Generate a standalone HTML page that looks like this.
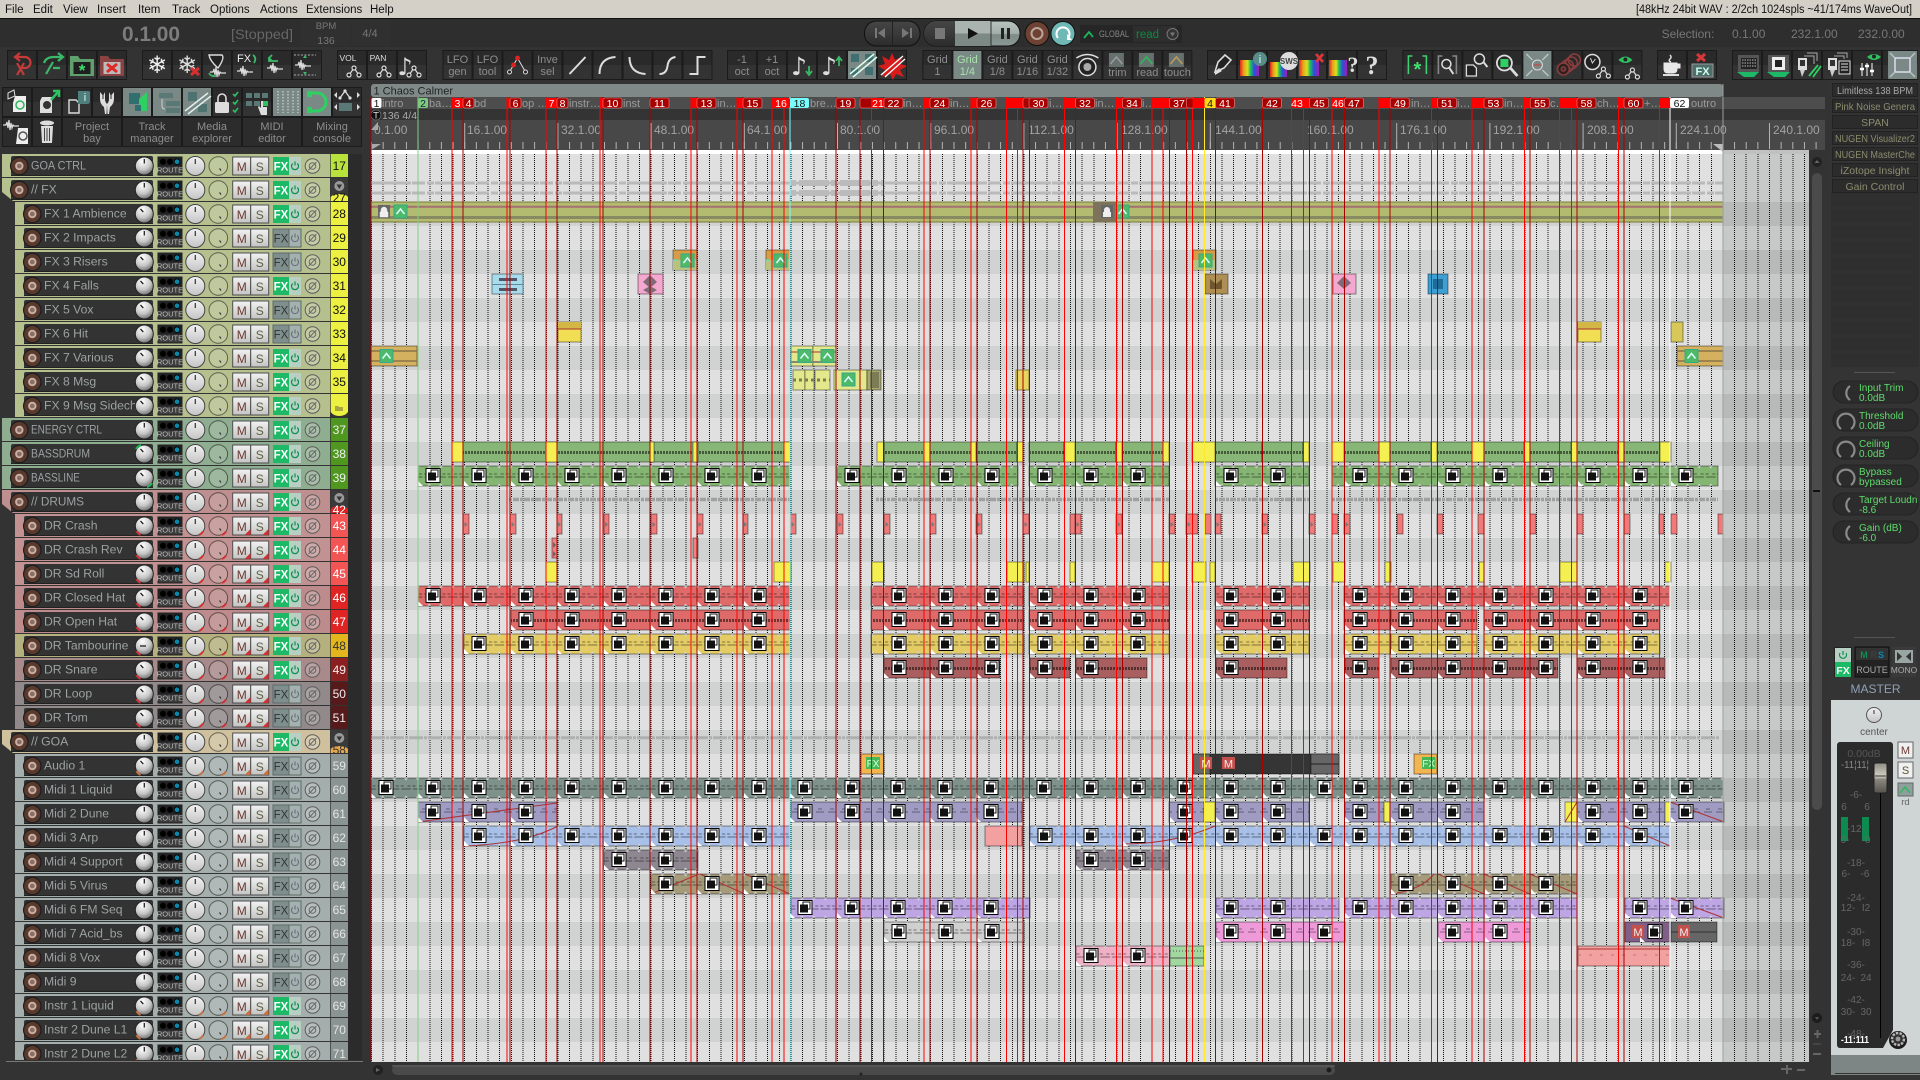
<!DOCTYPE html>
<html><head><meta charset="utf-8"><title>REAPER</title>
<style>
html,body{margin:0;padding:0;background:#333;overflow:hidden}
svg{display:block;font-family:"Liberation Sans",sans-serif}
.n{font-size:12.2px;fill:#9ba1a1}
.no{font-size:12px;text-anchor:middle}
.tb{font-size:11px;fill:#8d8d8d;text-anchor:middle}
.mn{font-size:11.5px;fill:#111}
.rl{font-size:12px;fill:#a2a2a2}
.l{font-size:11px;fill:#9a9a9a}
.m{font-size:10.5px;fill:#fff;text-anchor:middle}
.f{height:10px;y:-9px;rx:2px;ry:2px}
.r{fill:#f00}.d{fill:#a80000;stroke:#e88;stroke-width:.6}
.i rect{height:20px;stroke:rgba(0,0,0,.42);stroke-width:1}
.fl{font-size:10.5px;fill:#8c8c6e;text-anchor:middle}
.kt{font-size:10px;fill:#5fdc6c}
.sc{font-size:10px;fill:#666;text-anchor:middle}
.cr{shape-rendering:crispEdges}
</style></head><body>
<svg xmlns="http://www.w3.org/2000/svg" width="1920" height="1080" viewBox="0 0 1920 1080">
<defs>
<radialGradient id="kb" cx=".4" cy=".25" r=".9"><stop offset="0" stop-color="#fff"/><stop offset=".5" stop-color="#c8c8c8"/><stop offset="1" stop-color="#4c4c4c"/></radialGradient>
<linearGradient id="kw" x1="0" y1="0" x2="0" y2="1"><stop offset="0" stop-color="#f2f2f2"/><stop offset="1" stop-color="#c4c4c4"/></linearGradient>
<linearGradient id="pl" x1="0" y1="0" x2="0" y2="1"><stop offset="0" stop-color="#b9c4c0"/><stop offset=".5" stop-color="#a2aeaa"/><stop offset=".55" stop-color="#7e8a86"/><stop offset="1" stop-color="#8c9895"/></linearGradient>
<linearGradient id="cp" x1="0" y1="0" x2="0" y2="1"><stop offset="0" stop-color="#454545"/><stop offset=".5" stop-color="#3a3a3a"/><stop offset="1" stop-color="#2c2c2c"/></linearGradient>
<linearGradient id="fd" x1="0" y1="0" x2="0" y2="1"><stop offset="0" stop-color="#8f8d82"/><stop offset=".45" stop-color="#d3d0c4"/><stop offset=".55" stop-color="#8a887e"/><stop offset="1" stop-color="#55534c"/></linearGradient>
<linearGradient id="rb" x1="0" y1="0" x2="1" y2="0"><stop offset="0" stop-color="#e3241c"/><stop offset=".2" stop-color="#e6a21c"/><stop offset=".4" stop-color="#d8e01c"/><stop offset=".55" stop-color="#1fbf5e"/><stop offset=".75" stop-color="#2a52d8"/><stop offset="1" stop-color="#a01cb8"/></linearGradient>
<pattern id="dot" width="4" height="2" patternUnits="userSpaceOnUse"><rect width="4" height="1" fill="#111"/></pattern>
<pattern id="bp" width="30" height="30" patternUnits="userSpaceOnUse"><rect width="30" height="30" fill="#1b1b1b"/><rect x="1" y="1" width="28" height="14" fill="#2a2a2a"/><rect x="1" y="15" width="28" height="14" fill="#333"/></pattern>
<g id="sc"><path fill="#d8dad9" d="M0 0h2.2l-2.2 2.4zM11.65 0h-2.2l2.2 2.4zM0 20h2.2l-2.2-2.4zM11.65 20h-2.2l2.2-2.4z"/><path stroke="rgba(0,0,0,.45)" fill="none" d="M0 11h5m2 0h4.6M1.5 8h3m2 0h3"/></g>
<g id="pb"><path stroke="rgba(0,0,0,.5)" stroke-width="3" fill="none" stroke-dasharray="2 1" d="M0 10.5h12"/></g>
<pattern id="sG" width="11.65" height="20" patternUnits="userSpaceOnUse" patternTransform="translate(9.85,0)"><rect width="12" height="20" fill="#85b573"/><use href="#sc"/></pattern>
<pattern id="sR" width="11.65" height="20" patternUnits="userSpaceOnUse" patternTransform="translate(9.85,0)"><rect width="12" height="20" fill="#df6a6a"/><use href="#sc"/></pattern>
<pattern id="sY" width="11.65" height="20" patternUnits="userSpaceOnUse" patternTransform="translate(9.85,0)"><rect width="12" height="20" fill="#e3cb66"/><use href="#sc"/></pattern>
<pattern id="s1" width="11.65" height="20" patternUnits="userSpaceOnUse" patternTransform="translate(9.85,0)"><rect width="12" height="20" fill="#7e918b"/><use href="#sc"/></pattern>
<pattern id="s3" width="11.65" height="20" patternUnits="userSpaceOnUse" patternTransform="translate(9.85,0)"><rect width="12" height="20" fill="#a8bfe8"/><use href="#sc"/></pattern>
<pattern id="s4" width="11.65" height="20" patternUnits="userSpaceOnUse" patternTransform="translate(9.85,0)"><rect width="12" height="20" fill="#8e8792"/><use href="#sc"/></pattern>
<pattern id="s5" width="11.65" height="20" patternUnits="userSpaceOnUse" patternTransform="translate(9.85,0)"><rect width="12" height="20" fill="#a59b7b"/><use href="#sc"/></pattern>
<pattern id="s6" width="11.65" height="20" patternUnits="userSpaceOnUse" patternTransform="translate(9.85,0)"><rect width="12" height="20" fill="#bda6e3"/><use href="#sc"/></pattern>
<pattern id="s8" width="11.65" height="20" patternUnits="userSpaceOnUse" patternTransform="translate(9.85,0)"><rect width="12" height="20" fill="#eeb0c4"/><use href="#sc"/></pattern>
<pattern id="sW" width="11.65" height="20" patternUnits="userSpaceOnUse" patternTransform="translate(9.85,0)"><rect width="12" height="20" fill="#cfcfcf"/><use href="#sc"/></pattern>
<pattern id="pG" width="12" height="20" patternUnits="userSpaceOnUse"><rect width="12" height="20" fill="#87b676"/><use href="#pb"/></pattern>
<pattern id="pR" width="12" height="20" patternUnits="userSpaceOnUse"><rect width="12" height="20" fill="#df6a6a"/><use href="#pb"/></pattern>
<pattern id="pS" width="12" height="20" patternUnits="userSpaceOnUse"><rect width="12" height="20" fill="#a95f5f"/><use href="#pb"/></pattern>
<pattern id="p2" width="12" height="20" patternUnits="userSpaceOnUse"><rect width="12" height="20" fill="#a09bc2"/><path stroke="rgba(0,0,0,.4)" fill="none" d="M0 10h8M2 7h4"/></pattern>
<pattern id="p7" width="12" height="20" patternUnits="userSpaceOnUse"><rect width="12" height="20" fill="#ee9ad8"/><path stroke="rgba(0,0,0,.4)" fill="none" d="M0 10h8M2 7h4"/></pattern>
<g id="L"><path fill="#fff" d="M-15 20v-5l5 5z"/><rect x="-7" y="2.5" width="14" height="14" fill="#fff" stroke="#000"/><path fill="#111" d="M-5 6.500h8v8h-8z"/><path fill="none" stroke="#111" d="M-2 6.500v-2.500h7v7h-2"/></g>
<g id="c">
<rect x="158" y="3" width="24" height="18" fill="#3c3c3c" stroke="#222"/><rect x="158.500" y="3.500" width="23" height="9" fill="#222"/>
<circle cx="163" cy="7.800" r="3" fill="#000"/><circle cx="170" cy="7.800" r="3" fill="#000"/><circle cx="177" cy="7.800" r="2.800" fill="#0a87a8" stroke="#000" stroke-width=".8"/>
<text x="170" y="18.500" font-size="7.500" fill="#b8b8b8" text-anchor="middle">ROUTE</text>
<circle cx="195.300" cy="12" r="9.500" fill="url(#kw)" stroke="#444"/><path d="M195.300 5v5" stroke="#333" stroke-width="1.200"/>
<circle cx="218.300" cy="12" r="9.300" fill="rgba(255,255,255,.14)" stroke="rgba(0,0,0,.5)"/><path d="M219.500 14.500l1.500 2" stroke="#333" stroke-width="1.200"/>
<rect x="232.700" y="3" width="18" height="18" fill="url(#kw)" stroke="#4e4e4e"/><rect x="250.700" y="3" width="18" height="18" fill="url(#kw)" stroke="#4e4e4e"/>
<text x="241.700" y="17" font-size="12" fill="#6a3a30" text-anchor="middle">M</text><text x="259.700" y="17" font-size="12" fill="#5f6040" text-anchor="middle">S</text>
<circle cx="312.500" cy="12" r="7.300" fill="rgba(255,255,255,.22)" stroke="#5c5c5c"/><circle cx="312.500" cy="12" r="3.300" fill="none" stroke="#666"/><path d="M308.500 16l8-8" stroke="#666"/>
</g>
<g id="on"><rect x="273" y="3" width="16" height="18" fill="#1eb967"/><rect x="289" y="3" width="12" height="18" fill="#b8cfc4"/><text x="281" y="16.500" font-size="11.500" font-weight="bold" fill="#fff" text-anchor="middle">FX</text><path d="M292.700 9.500a3.500 3.500 0 1 0 4.600 0M295 7.500v4" fill="none" stroke="#0c8f50" stroke-width="1.200"/></g>
<g id="off"><rect x="273" y="3" width="16" height="18" fill="#7f8f8d" stroke="#5d6a68"/><rect x="289" y="3" width="12" height="18" fill="#a3b1af" stroke="#5d6a68"/><text x="281" y="16.500" font-size="11.500" fill="#333" text-anchor="middle">FX</text><path d="M292.700 9.500a3.500 3.500 0 1 0 4.600 0M295 7.500v4" fill="none" stroke="#667" stroke-width="1"/></g>
<g id="pk"><circle cx="144.300" cy="12" r="9" fill="url(#kb)" stroke="#222"/></g>
<g id="p0"><use href="#pk"/><path d="M144.300 5v4.500" stroke="#222" stroke-width="1.300"/></g>
<g id="p1"><use href="#pk"/><path d="M140.500 7l2.800 3" stroke="#222" stroke-width="1.300"/></g>
<g id="k"><path fill="currentColor" d="M250.500 21v-6l-6 6zM268.500 21v-6l-6 6z"/><path fill="none" stroke="currentColor" stroke-width="2" d="M203 17.500a9.500 9.500 0 0 1-4 3.500M226 17.500a9.500 9.500 0 0 1-4 3.500M136.500 17a9.300 9.300 0 0 0 4 4"/></g>
<g id="nc"><rect x="24" y="2" width="129" height="20" rx="2" fill="#333"/><rect x="24" y="21" width="129" height="1" fill="#222"/><circle cx="32.300" cy="12" r="8.700" fill="#5b3a2e" stroke="#1e1e1e" stroke-width="1.300"/><circle cx="32.300" cy="12" r="3.300" fill="#8c6e62" stroke="#cbb3a9" stroke-width="1.800"/></g>
<g id="nf"><rect x="11" y="2" width="142" height="20" rx="2" fill="#333"/><rect x="11" y="21" width="142" height="1" fill="#222"/><circle cx="19.300" cy="12" r="8.700" fill="#5b3a2e" stroke="#1e1e1e" stroke-width="1.300"/><circle cx="19.300" cy="12" r="3.300" fill="#8c6e62" stroke="#cbb3a9" stroke-width="1.800"/></g>
<g id="fc"><rect x="330.700" width="17.300" height="23" fill="#3a3a3a"/><circle cx="339.300" cy="8" r="5" fill="#999"/><path d="M336.500 6.500h5.600l-2.800 4.500z" fill="#333"/></g>
<g id="ev" fill="none" stroke="#ddd" stroke-width="1.200"><path d="M-7 6l5-7 5 7"/><circle cx="-7" cy="6" r="2" fill="#222"/><circle cx="-2" cy="-1" r="2" fill="#222"/><circle cx="3" cy="6" r="2" fill="#222"/></g>
<g id="wv"><path fill="none" stroke="#ddd" stroke-width="1.200" d="M-10 0h3l1-3 1 6 1-8 1 10 1-7 1 5 1-3 1 1h5"/></g>
<g id="ln"><rect x="-6" y="-9" width="13" height="13" fill="#4eb968" stroke="#3a8"/><path d="M-3.500 0l4-5 4 5" fill="none" stroke="#dff" stroke-width="1.500"/></g>
</defs>

<rect width="1920" height="1080" fill="#333"/>
<!-- menu -->
<rect width="1920" height="18" fill="#d4d0c8"/><rect y="18" width="1920" height="1" fill="#111"/>
<g class="mn">
<text class="mn" x="5" y="13">File</text><text class="mn" x="33" y="13">Edit</text><text class="mn" x="63" y="13">View</text><text class="mn" x="97" y="13">Insert</text><text class="mn" x="138" y="13">Item</text><text class="mn" x="172" y="13">Track</text><text class="mn" x="210" y="13">Options</text><text class="mn" x="260" y="13">Actions</text><text class="mn" x="306" y="13">Extensions</text><text class="mn" x="370" y="13">Help</text>
<text class="mn" x="1636" y="13" textLength="276" lengthAdjust="spacingAndGlyphs">[48kHz 24bit WAV : 2/2ch 1024spls ~41/174ms WaveOut]</text>
</g>
<!-- transport -->
<rect y="19" width="1920" height="28" fill="#2e2e2e"/>
<text x="122" y="41" font-size="21" font-weight="bold" fill="#7c7c7c" textLength="58" lengthAdjust="spacingAndGlyphs">0.1.00</text>
<text x="231" y="39" font-size="14" fill="#666" textLength="62" lengthAdjust="spacingAndGlyphs">[Stopped]</text>
<rect x="301" y="20" width="50" height="26" fill="#303030"/><rect x="352" y="20" width="38" height="26" fill="#303030"/>
<text x="326" y="29" font-size="9.500" fill="#777" text-anchor="middle">BPM</text><text x="326" y="44" font-size="10.500" fill="#777" text-anchor="middle">136</text><text x="370" y="37" font-size="11" fill="#777" text-anchor="middle">4/4</text>
<rect x="864.500" y="21" width="55.500" height="25" rx="12" fill="url(#cp)" stroke="#111"/><path d="M892.500 21v25" stroke="#222"/>
<path fill="#777" d="M875 28h2v10h-2zM885 28v10l-7-5zM902 28v10l7-5zM910 28h2v10h-2z"/>
<rect x="924" y="21" width="96" height="25" rx="12" fill="url(#pl)" stroke="#111"/><path d="M936 21h19v25h-19a12 12 0 0 1-12-12.500 12 12 0 0 1 12-12.500z" fill="url(#cp)"/><path d="M955 21h36v25h-36z" fill="#a9b4b0"/><path d="M955 33.500h36v12.500h-36z" fill="#7d8985"/><path d="M991 21v25" stroke="#333"/>
<rect x="935" y="28" width="10" height="11" fill="#777"/><path d="M968 28v11l10-5.500z" fill="#111"/><path fill="#222" d="M1001 28h3v11h-3zM1007 28h3v11h-3z"/>
<circle cx="1037" cy="33.500" r="12" fill="#6d4232" stroke="#111"/><circle cx="1037" cy="33.500" r="5.500" fill="none" stroke="#bba498" stroke-width="2"/>
<circle cx="1063" cy="33.500" r="12" fill="#6fb8b5" stroke="#111"/><path d="M1058 38a6.500 6.500 0 1 1 10 0" fill="none" stroke="#fff" stroke-width="2"/><path d="M1067 34v6h5z" fill="#fff"/>
<rect x="1080" y="25" width="102" height="18" fill="#262626"/><rect x="1133" y="26" width="43" height="16" fill="#2e2e2e"/>
<path d="M1084 38l5-6 4 5" fill="none" stroke="#1cb85f" stroke-width="1.800"/><text x="1099" y="37" font-size="9" fill="#848484" textLength="30" lengthAdjust="spacingAndGlyphs">GLOBAL</text><text x="1136" y="38" font-size="11.500" fill="#0c8a42">read</text><circle cx="1172.600" cy="34" r="5.500" fill="#333" stroke="#777"/><path d="M1170 32.500h5l-2.500 4z" fill="#777"/>
<text x="1661.600" y="38" font-size="12" fill="#777">Selection:</text><text x="1732" y="38" font-size="12" fill="#777">0.1.00</text><text x="1791" y="38" font-size="12" fill="#777">232.1.00</text><text x="1858" y="38" font-size="12" fill="#777">232.0.00</text>

<!-- right panel bg -->
<rect x="1830" y="80" width="90" height="1000" fill="#343434"/>

<!-- toolbar groups -->
<g transform="translate(7,50)"><rect width="120" height="30" fill="url(#bp)"/>
<path d="M9 7h9a5.500 5.500 0 0 1 0 11h-3M13 3l-5 4 5 4M10 13l7 12M17 13l-7 12" fill="none" stroke="#c63a3a" stroke-width="2.200"/>
<path d="M37 13q2-6 10-6h7M51 3l5 4-5 4M39 24l7-12M46 18h7" fill="none" stroke="#3cb869" stroke-width="2.200"/>
<path fill="#5fa06c" d="M63 6h8l2 3h14v17H63z"/><rect x="66.500" y="12" width="17" height="12" fill="#1f1f1f"/><text x="75" y="26" font-size="17" font-weight="bold" fill="#3fe070" text-anchor="middle">*</text>
<path fill="#8c4242" d="M93 6h8l2 3h14v17H93z"/><rect x="96.500" y="12" width="17" height="12" fill="#bbb"/><path d="M100 14l10 8M110 14l-10 8" stroke="#e02828" stroke-width="3"/>
</g>
<g transform="translate(142,50)"><rect width="180" height="30" fill="url(#bp)"/>
<text x="15" y="23" font-size="24" fill="#eee" text-anchor="middle" font-family="DejaVu Sans">❄</text><text x="45" y="23" font-size="24" fill="#ddd" text-anchor="middle" font-family="DejaVu Sans">❄</text><path d="M49 18l8 7M57 18l-8 7" stroke="#d83030" stroke-width="3"/>
<path d="M67 5h13q3 3-4 13q-8-7-9-13z" fill="#222" stroke="#ddd" stroke-width="1.400"/><use href="#wv" x="78" y="22"/><path d="M67 23q2 4 7 3" fill="none" stroke="#3cb869" stroke-width="1.800"/>
<text x="102" y="12" font-size="11" fill="#eee" text-anchor="middle">FX</text><path d="M111 5q4 3 1 8" fill="none" stroke="#3cb869" stroke-width="1.800"/><use href="#wv" x="105" y="21"/>
<path d="M127 7v4h9M130 5l-3 3 3 3" fill="none" stroke="#3cb869" stroke-width="1.800"/><use href="#wv" x="135" y="18"/>
<path d="M152 5h22M152 25h22" stroke="#aaa" stroke-dasharray="2 1.500"/><use href="#wv" x="163" y="15"/><path d="M161 8h4l-2-3zM161 22h4l-2 3z" fill="#3cb869"/>
</g>
<g transform="translate(337,50)"><rect width="90" height="30" fill="url(#bp)"/>
<text x="11" y="11" font-size="8.500" fill="#ddd" text-anchor="middle">VOL</text><use href="#ev" x="19" y="19"/><text x="41" y="11" font-size="8.500" fill="#ddd" text-anchor="middle">PAN</text><use href="#ev" x="49" y="19"/>
<text x="68" y="25" font-size="24" fill="#ddd" text-anchor="middle" font-family="DejaVu Sans">♪</text><use href="#ev" x="79" y="19"/>
</g>
<g transform="translate(442.500,50)"><rect width="270" height="30" fill="url(#bp)"/>
<text class="tb" x="15" y="13">LFO</text><text class="tb" x="15" y="25">gen</text><text class="tb" x="45" y="13">LFO</text><text class="tb" x="45" y="25">tool</text>
<path d="M67 22l8-14 8 14" fill="none" stroke="#ddd"/><circle cx="67" cy="22" r="2" fill="#222" stroke="#ddd"/><circle cx="71" cy="15" r="2.400" fill="#d22"/><circle cx="75" cy="8" r="2.400" fill="#d22"/><circle cx="83" cy="22" r="2" fill="#222" stroke="#ddd"/>
<text class="tb" x="105" y="13">Inve</text><text class="tb" x="105" y="25">sel</text>
<path d="M127 24L143 7" stroke="#ddd" stroke-width="2"/><path d="M157 24q0-16 16-17" fill="none" stroke="#ddd" stroke-width="2"/><path d="M187 7q0 16 16 17" fill="none" stroke="#ddd" stroke-width="2"/><path d="M217 24q7 0 8-8t8-9" fill="none" stroke="#ddd" stroke-width="2"/><path d="M247 24h8V7h8" fill="none" stroke="#ddd" stroke-width="2"/>
</g>
<g transform="translate(727,50)"><rect width="180" height="30" fill="url(#bp)"/>
<text class="tb" x="15" y="13">-1</text><text class="tb" x="15" y="25">oct</text><text class="tb" x="45" y="13">+1</text><text class="tb" x="45" y="25">oct</text>
<text x="72" y="25" font-size="25" fill="#ddd" text-anchor="middle" font-family="DejaVu Sans">♪</text><path d="M82 16v7M79 21l3 4 3-4" fill="none" stroke="#3cb869" stroke-width="1.800"/>
<text x="102" y="25" font-size="25" fill="#ddd" text-anchor="middle" font-family="DejaVu Sans">♪</text><path d="M112 8v8M109 11l3-4 3 4" fill="none" stroke="#3cb869" stroke-width="1.800"/>
<rect x="121" y="1" width="28" height="28" fill="#7a8886"/><path fill="#3f6f70" d="M124 4h8v8h-8zM138 17h8v8h-8zM124 18h7v7h-7zM138 4h8v8h-8z"/><path d="M123 24l24-20M126 27l24-20" stroke="#dfe" stroke-width="1.500"/>
<path fill="#d81c1c" d="M165 3l3 7 8-4-3 8 7 2-7 4 4 7-8-3-3 6-3-6-8 3 3-7-7-4 7-2-3-8 7 4z"/><path d="M154 25l22-19M158 27l20-18" stroke="#fff" stroke-width="1.300"/>
</g>
<g transform="translate(922.400,50)"><rect width="270" height="30" fill="url(#bp)"/>
<text class="tb" x="15" y="13">Grid</text><text class="tb" x="15" y="25">1</text>
<rect x="31" y="1" width="28" height="28" fill="#7a8886"/><text class="tb" x="45" y="13" style="fill:#a7e3ab">Grid</text><text class="tb" x="45" y="25" style="fill:#a7e3ab">1/4</text>
<text class="tb" x="75" y="13">Grid</text><text class="tb" x="75" y="25">1/8</text><text class="tb" x="105" y="13">Grid</text><text class="tb" x="105" y="25">1/16</text><text class="tb" x="135" y="13">Grid</text><text class="tb" x="135" y="25">1/32</text>
<circle cx="165" cy="17" r="8.500" fill="#222" stroke="#ddd" stroke-width="1.500"/><circle cx="165" cy="17" r="4" fill="#aaa"/><path d="M154 8q11-7 22 0" fill="none" stroke="#ddd" stroke-width="1.500"/>
<rect x="186.500" y="3" width="15" height="14" fill="#66706e"/><path d="M188 14l6-7 6 7" fill="none" stroke="#999" stroke-width="1.600"/><text class="tb" x="195" y="26">trim</text>
<rect x="216.500" y="3" width="15" height="14" fill="#66706e"/><path d="M218 14l6-7 6 7" fill="none" stroke="#2fb85c" stroke-width="1.600"/><text class="tb" x="225" y="26">read</text>
<rect x="246.500" y="3" width="15" height="14" fill="#66706e"/><path d="M248 14l6-7 6 7" fill="none" stroke="#b99c5a" stroke-width="1.600"/><text class="tb" x="255" y="26">touch</text>
</g>
<g transform="translate(1207,50)"><rect width="180" height="30" fill="url(#bp)"/>
<path d="M8 22l3-10 7-7 6 5-7 8z" fill="#222" stroke="#ddd" stroke-width="1.600"/><path d="M8 22v3l7-4-3-3z" fill="#ddd"/>
<rect x="33" y="10" width="19" height="16" fill="url(#rb)"/><circle cx="53" cy="9" r="7" fill="#5a8d8a"/><text x="53" y="13" font-size="11" fill="#dff" text-anchor="middle">i</text>
<rect x="63" y="12" width="17" height="15" fill="url(#rb)"/><circle cx="82" cy="11" r="9" fill="#ddd"/><text x="82" y="14" font-size="8" font-weight="bold" fill="#444" text-anchor="middle">SWS</text>
<rect x="92" y="10" width="20" height="16" fill="url(#rb)"/><path d="M109 4l7 8M116 4l-7 8" stroke="#d83838" stroke-width="2.800"/>
<rect x="122" y="10" width="18" height="16" fill="url(#rb)"/><text x="146" y="22" font-size="22" font-weight="bold" fill="#ddd" text-anchor="middle" font-family="Liberation Serif">?</text>
<text x="165" y="24" font-size="26" font-weight="bold" fill="#ddd" text-anchor="middle" font-family="Liberation Serif">?</text>
</g>
<g transform="translate(1402.400,50)"><rect width="240" height="30" fill="url(#bp)"/>
<path d="M6 24V6h4M24 24V6h-4" fill="none" stroke="#3fd070" stroke-width="1.600"/><text x="15" y="26" font-size="20" font-weight="bold" fill="#3fe070" text-anchor="middle">*</text>
<path d="M36 24V6h4M54 24V6h-4" fill="none" stroke="#888" stroke-width="1.600"/><circle cx="44" cy="14" r="4.500" fill="none" stroke="#ddd" stroke-width="1.500"/><path d="M47 18l4 6" stroke="#ddd" stroke-width="2"/>
<path d="M64 15h7l3 3v8H64z" fill="#222" stroke="#ddd" stroke-width="1.300"/><circle cx="77" cy="9" r="5" fill="none" stroke="#ddd" stroke-width="1.500"/><path d="M81 12l4 5" stroke="#ddd" stroke-width="2"/>
<circle cx="102" cy="13" r="7.500" fill="none" stroke="#ddd" stroke-width="1.800"/><rect x="98" y="9" width="8" height="8" fill="#2fd062"/><path d="M108 18l7 8" stroke="#ddd" stroke-width="2.800"/>
<rect x="121" y="1" width="28" height="28" fill="#7a8886"/><circle cx="135" cy="15" r="5" fill="none" stroke="#ddd"/><path d="M132 15h6" stroke="#c44" stroke-width="1.300"/><path d="M124 4l6 6M146 4l-6 6M124 26l6-6M146 26l-6-6" stroke="#b8c4c2" stroke-width="1.500"/>
<g fill="none" stroke="#8c3c3c" stroke-width="1.600"><circle cx="172" cy="10" r="6"/><circle cx="169" cy="13" r="6"/><circle cx="165" cy="16" r="6"/><circle cx="161" cy="19" r="6" fill="#2e2020"/><circle cx="161" cy="19" r="2"/></g>
<circle cx="190" cy="12" r="7.500" fill="#222" stroke="#ddd" stroke-width="1.500"/><path d="M188 8l2 5 3-4" fill="none" stroke="#ddd"/><use href="#ev" x="203" y="20"/>
<path d="M216 10q7-7 14 0q-7 6-14 0z" fill="#2fc062"/><circle cx="223" cy="9.500" r="2" fill="#222"/><use href="#ev" x="232" y="21"/>
</g>
<g transform="translate(1657,50)"><rect width="60" height="30" fill="url(#bp)"/>
<path d="M7 13h13v6q0 4-4 4h-5q-4 0-4-4zM20 14h3v4h-3" fill="#e8e8e8" stroke="#e8e8e8"/><rect x="6" y="24" width="16" height="2" fill="#ddd"/><path d="M13 5q2 2 0 4q-2 2 1 3" fill="none" stroke="#ddd" stroke-width="1.500"/>
<path d="M40 4l8 7M48 4l-8 7" stroke="#d83838" stroke-width="3"/><rect x="35" y="14" width="21" height="13" fill="#4f6d6b" stroke="#999"/><text x="45.500" y="25" font-size="11" font-weight="bold" fill="#cfe" text-anchor="middle">FX</text>
</g>
<g transform="translate(1732,50)"><rect width="186" height="30" fill="url(#bp)"/>
<rect x="6" y="5" width="21" height="17" fill="#555"/><rect x="9" y="8" width="16" height="11" fill="#222"/><path d="M10 10h14M10 13h14M10 16h14" stroke="#bbb" stroke-dasharray="1.500 1"/><path d="M6 5v17M5 22h22l-5 5H12z" fill="#1eb967"/>
<rect x="36" y="5" width="21" height="17" fill="#555"/><rect x="40" y="7" width="13" height="13" fill="#eee"/><rect x="43" y="10" width="7" height="7" fill="#222"/><path d="M35 22h23l-5 5H42z" fill="#1eb967"/>
<path d="M75 3h10v8M72 6h10v8" fill="none" stroke="#aaa"/><rect x="66" y="8" width="9" height="12" fill="#ddd"/><rect x="68" y="10" width="5" height="6" fill="#333"/><path d="M68 20l2 7 3-7z" fill="#ccc"/><path d="M77 26l9-11M81 27l8-11" stroke="#2fd062" stroke-width="1.800"/>
<path d="M105 3h10v5M102 6h10v3" fill="none" stroke="#aaa"/><rect x="96" y="8" width="9" height="12" fill="#ddd"/><rect x="98" y="10" width="5" height="6" fill="#333"/><path d="M98 20l2 7 3-7z" fill="#ccc"/><rect x="107" y="11" width="11" height="13" fill="#222" stroke="#ddd"/><path d="M109 14h7M109 17h7M109 20h7" stroke="#ddd"/>
<path d="M130 13v13M135 13v13M140 13v13" stroke="#ddd" stroke-width="1.200"/><path d="M128 19h4M133 16h4M138 21h4" stroke="#fff" stroke-width="2.400"/><path d="M135 7q7-6 14 0q-7 6-14 0z" fill="#2fc062"/><circle cx="142" cy="6.500" r="2" fill="#222"/>
<rect x="156" y="1" width="29" height="28" fill="#7a8886"/><rect x="163" y="8" width="15" height="14" fill="none" stroke="#dde" stroke-width="1.500"/><path d="M158 3l5 5M183 3l-5 5M158 27l5-5M183 27l-5-5" stroke="#b8c4c2" stroke-width="1.500"/>
</g>

<!-- row 2/3 buttons -->
<g transform="translate(2,87)"><rect width="360" height="30" fill="url(#bp)"/>
<rect x="121" y="1" width="28" height="28" fill="#7a8886"/><rect x="151" y="1" width="28" height="28" fill="#7a8886"/><rect x="181" y="1" width="28" height="28" fill="#7a8886"/><rect x="271" y="1" width="28" height="28" fill="#7a8886"/><rect x="301" y="1" width="28" height="28" fill="#7a8886"/>
<path d="M13 9h11v16H11V16z" fill="#eee"/><circle cx="18" cy="18" r="4" fill="none" stroke="#2fb85c" stroke-width="1.500"/><path d="M6 12V6l6-3 1 6z" fill="none" stroke="#ddd"/>
<path d="M40 10h10v16H38V14z" fill="#ddd"/><circle cx="45" cy="18" r="4" fill="#333"/><path d="M49 13l7-8M51 4h6v6" fill="none" stroke="#2fc062" stroke-width="2.500"/>
<path d="M67 13h7l3 3v10H67z" fill="none" stroke="#ddd" stroke-width="1.400"/><path d="M76 4h10a2 2 0 0 1 2 2v8q0 3-3 3h-9z" fill="#4f7f7d"/><text x="83" y="14" font-size="11" fill="#dff" text-anchor="middle">i</text>
<path d="M98 5v7q0 5 4 8l1 7h1.500l.5-10q-2-2-2-5V5l-1.500 3v4h-1V8zM112 5v7q0 5-4 8l-1 7h-1.500l-.5-10q2-2 2-5V5l1.500 3v4h1V8z" fill="#ddd"/>
<g transform="translate(30,0)">
<rect x="97" y="6" width="11" height="11" fill="#2f6f6d"/><path d="M107 24V12l8-7v19z" fill="#2fd062"/><rect x="103" y="18" width="6" height="6" fill="#2f6f6d"/>
<rect x="127" y="6" width="14" height="5" fill="#597876"/><rect x="134" y="14" width="14" height="5" fill="#597876"/><rect x="134" y="21" width="14" height="5" fill="#597876"/><path d="M130 12v7q0 3 3 3" fill="none" stroke="#c8d8d6"/>
<rect x="156" y="5" width="9" height="9" fill="#4d7270"/><rect x="166" y="17" width="9" height="8" fill="#4d7270"/><path d="M153 24l23-18M156 27l23-18" stroke="#e0eeec" stroke-width="1.500"/>
<rect x="183" y="15" width="14" height="11" rx="1.500" fill="#ddd"/><path d="M186 15v-4a4 4 0 0 1 8 0v4" fill="none" stroke="#ddd" stroke-width="1.600"/><path d="M201 7l2 2 3-4M201 15l2 2 3-4M201 23l2 2 3-4" fill="none" stroke="#2fc062" stroke-width="1.600"/>
<path fill="#597876" d="M214 6h6v5h-6zM222 6h6v5h-6zM230 6h6v5h-6zM214 14h6v5h-6zM222 14h6v5h-6z"/><rect x="230" y="14" width="6" height="5" fill="#2fc062"/><path d="M229 28l-3-8 1-1 2 2v-7h2v6h4v8z" fill="#ddd"/>
</g>
<path d="M276 4v22M281 4v22M286 4v22M291 4v22M296 4v22" stroke="#d8e4e2" stroke-dasharray="1.500 1.500"/>
<path d="M307 6h8a9 9 0 0 1 0 18h-8" fill="none" stroke="#2fd062" stroke-width="3"/><path d="M305 4v6h5V4zM305 20v6h5v-6z" fill="#2fd062"/>
<path d="M338 11l5-7 5 7" fill="none" stroke="#ddd" stroke-width="1.300"/><circle cx="338" cy="11" r="1.600" fill="#ddd"/><circle cx="343" cy="4" r="1.600" fill="#ddd"/><circle cx="348" cy="11" r="1.600" fill="#ddd"/><rect x="337" y="16" width="13" height="8" fill="#597876"/><path d="M335 5l-3 3 3 3M355 5l3 3-3 3M335 17l-3 3 3 3M355 17l3 3-3 3" fill="#ddd"/>
</g>
<g transform="translate(2,117)"><rect width="360" height="30" fill="#1b1b1b"/>
<rect x="1" y="1" width="28" height="28" fill="#2c2c2c"/><rect x="31" y="1" width="28" height="28" fill="#2c2c2c"/><rect x="61" y="1" width="58" height="28" fill="#2c2c2c"/><rect x="121" y="1" width="58" height="28" fill="#2c2c2c"/><rect x="181" y="1" width="58" height="28" fill="#2c2c2c"/><rect x="241" y="1" width="58" height="28" fill="#2c2c2c"/><rect x="301" y="1" width="58" height="28" fill="#2c2c2c"/>
<path d="M16 11h10v16H14z" fill="#eee"/><circle cx="21" cy="19" r="4" fill="none" stroke="#555" stroke-width="1.500"/><use href="#wv" x="11" y="8"/>
<ellipse cx="45" cy="6" rx="7" ry="2.500" fill="#ddd"/><path d="M39 9h12l-1 17H40z" fill="#ddd"/><path d="M42.500 11v13M45 11v13M47.500 11v13" stroke="#444"/>
<text class="tb" x="90" y="13">Project</text><text class="tb" x="90" y="25">bay</text><text class="tb" x="150" y="13">Track</text><text class="tb" x="150" y="25">manager</text><text class="tb" x="210" y="13">Media</text><text class="tb" x="210" y="25">explorer</text><text class="tb" x="270" y="13">MIDI</text><text class="tb" x="270" y="25">editor</text><text class="tb" x="330" y="13">Mixing</text><text class="tb" x="330" y="25">console</text>
</g>

<!-- ruler / lanes -->
<rect x="371" y="84" width="1352" height="13" rx="3" fill="#7f8a88"/><text x="373.500" y="94.500" font-size="11" fill="#222">1  Chaos Calmer</text>
<rect x="371" y="97" width="1454" height="12" fill="#4d4d4d"/><rect x="371" y="109" width="1454" height="11" fill="#343434"/><rect x="371" y="120" width="1454" height="30" fill="#484848"/>
<path d="M371 145.500H1826" stroke="#b4b4b4" stroke-width="7" stroke-dasharray="1 10.650"/>
<path d="M464.200 136H1826" stroke="#b4b4b4" stroke-width="26" stroke-dasharray="1 92.200"/>
<rect x="371" y="150" width="1352" height="4" fill="#fff"/><rect x="1723" y="150" width="86" height="4" fill="#c0c2c1"/>
<path d="M371 130l7-8v8zM371 150l10-6h-10z" fill="#aaa"/><path d="M1713 144h10v8z" fill="#bbb"/>
<g>
<text class="rl" x="374" y="134">0.1.00</text><text class="rl" x="467" y="134">16.1.00</text><text class="rl" x="561" y="134">32.1.00</text><text class="rl" x="654" y="134">48.1.00</text><text class="rl" x="747" y="134">64.1.00</text><text class="rl" x="840" y="134">80.1.00</text><text class="rl" x="934" y="134">96.1.00</text><text class="rl" x="1028" y="134">112.1.00</text><text class="rl" x="1121" y="134">128.1.00</text><text class="rl" x="1215" y="134">144.1.00</text><text class="rl" x="1307" y="134">160.1.00</text><text class="rl" x="1400" y="134">176.1.00</text><text class="rl" x="1493" y="134">192.1.00</text><text class="rl" x="1587" y="134">208.1.00</text><text class="rl" x="1680" y="134">224.1.00</text><text class="rl" x="1773" y="134">240.1.00</text>
</g>
<circle cx="376" cy="115" r="5" fill="#111" stroke="#888" stroke-width=".6"/><text x="376" y="118.500" font-size="9.500" fill="#ddd" text-anchor="middle">T</text><text x="382" y="119" font-size="10.500" fill="#aaa">136 4/4</text>

<!-- arrange bg -->
<rect x="371" y="154" width="1352" height="908" fill="#dfe0df"/><rect x="1723" y="154" width="86" height="908" fill="#c7c9c8"/>
<path d="M1047 202V1062" stroke="#d1d3d2" stroke-width="1352" stroke-dasharray="24 24"/>
<path d="M1766 202V1062" stroke="#b8bab9" stroke-width="86" stroke-dasharray="24 24"/>
<path class="cr" d="M371 608H1809" stroke="url(#dot)" stroke-width="908" stroke-dasharray="1 10.650"/>

<!-- items -->
<g class="i">
<path d="M371 183H1723M371 193H1723" stroke="#bababa" stroke-width="3" stroke-dasharray="40 1 13 2 7 1"/>
<path d="M790 183H885M790 193H885" stroke="#bbb" stroke-width="6" stroke-dasharray="6 3 30 2"/>
<g transform="translate(0,202)"><rect x="371" width="1352" fill="#b3bb70" style="stroke:#7b7b3c"/><path d="M371 4.700H1723" stroke="#a57070" stroke-width="2"/><path d="M371 15.500H1723" stroke="#888a62" stroke-width="3"/><rect x="1093" width="23" fill="#7d735a" style="stroke:none"/>
<rect x="378" y="3" width="12" height="13" style="height:13px;stroke:none" fill="#666"/><path d="M381 11v-3a3 3 0 0 1 6 0v3M380 10h8v5h-8z" fill="#eee" stroke="#eee" stroke-width=".5"/><use href="#ln" x="400" y="12"/>
<rect x="1101" y="3" width="12" height="13" style="height:13px;stroke:none" fill="#666"/><path d="M1104 11v-3a3 3 0 0 1 6 0v3M1103 10h8v5h-8z" fill="#eee"/><use href="#ln" x="1122" y="12"/></g>
<g transform="translate(0,250)"><rect x="673" width="24" fill="#d99c46"/><rect x="673" y="10" width="24" style="height:10px;stroke:none" fill="#b8c27c"/><path d="M673 10h24" stroke="#3ee" stroke-width="1" stroke-dasharray="4 16"/><use href="#ln" x="687" y="13"/>
<rect x="766" width="24" fill="#d99c46"/><rect x="766" y="10" width="24" style="height:10px;stroke:none" fill="#b8c27c"/><path d="M766 10h24" stroke="#3ee" stroke-width="1" stroke-dasharray="4 16"/><use href="#ln" x="780" y="13"/>
<rect x="1193" width="23" fill="#d99c46"/><rect x="1193" y="10" width="23" style="height:10px;stroke:none" fill="#b8c27c"/><use href="#ln" x="1205" y="13"/></g>
<g transform="translate(0,274)"><rect x="492" width="31" fill="#a8dcec"/><path d="M499 5.500h18M499 15.500h18" stroke="#556" stroke-width="3"/><path d="M492 10.500h31" stroke="#5b8a9a"/>
<rect x="638" width="25" fill="#f4a8d0"/><path d="M650 1l7 7-7 6-7-6zM650 12l7 4-7 4-7-4z" fill="#7f6a78"/>
<rect x="1205" width="23" fill="#b08f55"/><path d="M1210 5l6 5 6-5v10h-12z" fill="#70552e"/>
<rect x="1333" width="23" fill="#f4a8d0"/><path d="M1344 2l7 7-7 6-7-6z" fill="#7f6a78"/>
<rect x="1428" width="20" fill="#3d9fd2"/><rect x="1433" y="5" width="10" style="height:10px;stroke:none" fill="#1f6d96"/></g>
<g transform="translate(0,322)"><rect x="558" width="23" fill="#f2de55"/><rect x="558" width="23" style="height:7px;stroke:none" fill="#d3b746"/><path d="M558 7h23" stroke="#a33" stroke-width="1"/>
<rect x="1578" width="23" fill="#f2de55"/><rect x="1578" width="23" style="height:7px;stroke:none" fill="#d3b746"/><path d="M1578 7h23" stroke="#a33"/>
<rect x="1671" width="12" fill="#d8c85a"/></g>
<g transform="translate(0,346)"><rect x="371" width="46" fill="#d4b15f"/><path d="M371 5h46M371 15h46" stroke="#8a7448" stroke-width="1.500"/><use href="#ln" x="386" y="12.500"/>
<rect x="791" width="22" fill="#e2e88b"/><rect x="813" width="23" fill="#e2e88b"/><path d="M791 6h45" stroke="#a33"/><path d="M791 16h45" stroke="#887" stroke-width="2"/><use href="#ln" x="804" y="12.500"/><use href="#ln" x="827" y="12.500"/>
<rect x="1677" width="46" fill="#d4b15f"/><path d="M1677 5h46M1677 15h46" stroke="#8a7448" stroke-width="1.500"/><use href="#ln" x="1691" y="12.500"/></g>
<g transform="translate(0,370)"><rect x="793" width="12" fill="#e2e88b"/><rect x="805" width="9" fill="#e2e88b"/><rect x="815" width="15" fill="#e2e88b"/><path d="M793 10h37" stroke="#7c7c50" stroke-width="3" stroke-dasharray="3 3"/><rect x="834" width="33" fill="#e2e88b"/><use href="#ln" x="848" y="12"/><rect x="867" width="14" fill="#a8a86e"/><rect x="870" y="2" width="9" style="height:16px;stroke:none" fill="#7d7d55"/>
<rect x="1016" width="13" fill="#e8d45e"/></g>
<g transform="translate(0,442)"><g fill="url(#pG)"><rect x="463" width="327"/><rect x="884" width="40"/><rect x="930" width="41"/><rect x="976" width="41"/><rect x="1029" width="35"/><rect x="1075" width="41"/><rect x="1122" width="41"/><rect x="1215" width="47"/><rect x="1262" width="41"/><rect x="1344" width="326"/></g>
<g fill="#f4f052"><rect x="452" width="11"/><rect x="546" width="11"/><rect x="650" width="4"/><rect x="693" width="5"/><rect x="784" width="6"/><rect x="877" width="7"/><rect x="924" width="6"/><rect x="971" width="5"/><rect x="1017" width="6"/><rect x="1064" width="11"/><rect x="1116" width="6"/><rect x="1163" width="6"/><rect x="1192" width="23"/><rect x="1303" width="6"/><rect x="1332" width="12"/><rect x="1379" width="11"/><rect x="1431" width="6"/><rect x="1472" width="12"/><rect x="1524" width="6"/><rect x="1571" width="6"/><rect x="1618" width="6"/><rect x="1660" width="11"/></g></g>
<g transform="translate(0,466)" fill="url(#sG)"><rect x="418" width="372"/><rect x="837" width="181"/><rect x="1029" width="140"/><rect x="1215" width="94"/><rect x="1332" width="386"/>
<use href="#L" x="433"/><use href="#L" x="479"/><use href="#L" x="526"/><use href="#L" x="572"/><use href="#L" x="619"/><use href="#L" x="666"/><use href="#L" x="712"/><use href="#L" x="759"/><use href="#L" x="852"/><use href="#L" x="899"/><use href="#L" x="946"/><use href="#L" x="992"/><use href="#L" x="1045"/><use href="#L" x="1091"/><use href="#L" x="1138"/><use href="#L" x="1231"/><use href="#L" x="1278"/><use href="#L" x="1360"/><use href="#L" x="1406"/><use href="#L" x="1453"/><use href="#L" x="1500"/><use href="#L" x="1546"/><use href="#L" x="1593"/><use href="#L" x="1640"/><use href="#L" x="1686"/></g>
<path d="M509 499.500H790M876 499.500H1169M1215 499.500H1309M1332 499.500H1718" stroke="#a0a0a0" stroke-width="3.500" stroke-dasharray="3 1 6 1"/>
<g transform="translate(0,514)" fill="#f0797a"><rect x="463" width="6"/><rect x="510" width="6"/><rect x="557" width="5"/><rect x="604" width="5"/><rect x="651" width="6"/><rect x="697" width="6"/><rect x="743" width="5"/><rect x="790" width="6"/><rect x="837" width="6"/><rect x="884" width="6"/><rect x="930" width="6"/><rect x="976" width="6"/><rect x="1023" width="6"/><rect x="1070" width="6"/><rect x="1075" width="6"/><rect x="1116" width="6"/><rect x="1169" width="6"/><rect x="1186" width="12"/><rect x="1205" width="6"/><rect x="1215" width="6"/><rect x="1262" width="6"/><rect x="1309" width="6"/><rect x="1332" width="6"/><rect x="1344" width="6"/><rect x="1397" width="6"/><rect x="1437" width="6"/><rect x="1478" width="6"/><rect x="1530" width="6"/><rect x="1577" width="6"/><rect x="1624" width="6"/><rect x="1659" width="5"/><rect x="1671" width="6"/><rect x="1718" width="5"/>
<path fill="#777" d="M464.500 8l3 2.500-3 2.500zM511.500 8l3 2.500-3 2.500zM558 8l3 2.500-3 2.500zM605 8l3 2.500-3 2.500zM652.500 8l3 2.500-3 2.500zM698.500 8l3 2.500-3 2.500zM744 8l3 2.500-3 2.500zM791.500 8l3 2.500-3 2.500zM838.500 8l3 2.500-3 2.500zM885.500 8l3 2.500-3 2.500zM931.500 8l3 2.500-3 2.500zM977.500 8l3 2.500-3 2.500zM1024.500 8l3 2.500-3 2.500zM1076.500 8l3 2.500-3 2.500zM1117.500 8l3 2.500-3 2.500zM1170.500 8l3 2.500-3 2.500zM1187.500 8l3 2.500-3 2.500zM1216.500 8l3 2.500-3 2.500zM1263.500 8l3 2.500-3 2.500zM1310.500 8l3 2.500-3 2.500zM1345.500 8l3 2.500-3 2.500z"/></g>
<g transform="translate(0,538)" fill="#ef8383"><rect x="552" width="5"/><path d="M553 4l3 3-3 3zM553 13l3 3-3 3z" fill="#666"/><rect x="693" width="5"/></g>
<g transform="translate(0,562)" fill="#f4f052"><rect x="546" width="11"/><rect x="774" width="17"/><rect x="872" width="12"/><rect x="1007" width="17"/><rect x="1026" width="3"/><rect x="1070" width="5"/><rect x="1152" width="17"/><rect x="1192" width="14"/><rect x="1210" width="5"/><rect x="1293" width="17"/><rect x="1333" width="12"/><rect x="1385" width="6"/><rect x="1479" width="5"/><rect x="1560" width="17"/><rect x="1665" width="6"/></g>
<g transform="translate(0,586)" fill="url(#sR)"><rect x="418" width="372"/><rect x="871" width="153"/><rect x="1029" width="140"/><rect x="1215" width="94"/><rect x="1344" width="326"/>
<use href="#L" x="433"/><use href="#L" x="479"/><use href="#L" x="526"/><use href="#L" x="572"/><use href="#L" x="619"/><use href="#L" x="666"/><use href="#L" x="712"/><use href="#L" x="759"/><use href="#L" x="899"/><use href="#L" x="946"/><use href="#L" x="992"/><use href="#L" x="1045"/><use href="#L" x="1091"/><use href="#L" x="1138"/><use href="#L" x="1231"/><use href="#L" x="1278"/><use href="#L" x="1360"/><use href="#L" x="1406"/><use href="#L" x="1453"/><use href="#L" x="1500"/><use href="#L" x="1546"/><use href="#L" x="1593"/><use href="#L" x="1640"/></g>
<g transform="translate(0,610)" fill="url(#pR)"><rect x="511" width="279"/><rect x="871" width="153"/><rect x="1029" width="140"/><rect x="1215" width="94"/><rect x="1344" width="47"/><rect x="1391" width="86"/><rect x="1484" width="176"/>
<use href="#L" x="526"/><use href="#L" x="572"/><use href="#L" x="619"/><use href="#L" x="666"/><use href="#L" x="712"/><use href="#L" x="759"/><use href="#L" x="899"/><use href="#L" x="946"/><use href="#L" x="992"/><use href="#L" x="1045"/><use href="#L" x="1091"/><use href="#L" x="1138"/><use href="#L" x="1231"/><use href="#L" x="1278"/><use href="#L" x="1360"/><use href="#L" x="1406"/><use href="#L" x="1453"/><use href="#L" x="1500"/><use href="#L" x="1546"/><use href="#L" x="1593"/><use href="#L" x="1640"/></g>
<g transform="translate(0,634)" fill="url(#sY)"><rect x="464" width="326"/><rect x="871" width="153"/><rect x="1029" width="140"/><rect x="1215" width="94"/><rect x="1344" width="47"/><rect x="1391" width="86"/><rect x="1484" width="176"/>
<use href="#L" x="479"/><use href="#L" x="526"/><use href="#L" x="572"/><use href="#L" x="619"/><use href="#L" x="666"/><use href="#L" x="712"/><use href="#L" x="759"/><use href="#L" x="899"/><use href="#L" x="946"/><use href="#L" x="992"/><use href="#L" x="1045"/><use href="#L" x="1091"/><use href="#L" x="1138"/><use href="#L" x="1231"/><use href="#L" x="1278"/><use href="#L" x="1360"/><use href="#L" x="1406"/><use href="#L" x="1453"/><use href="#L" x="1500"/><use href="#L" x="1546"/><use href="#L" x="1593"/><use href="#L" x="1640"/></g>
<g transform="translate(0,658)" fill="url(#pS)"><rect x="884" width="116"/><rect x="1030" width="40"/><rect x="1076" width="71"/><rect x="1216" width="71"/><rect x="1345" width="34"/><rect x="1391" width="167"/><rect x="1577" width="88"/>
<use href="#L" x="899"/><use href="#L" x="946"/><use href="#L" x="992"/><use href="#L" x="1045"/><use href="#L" x="1091"/><use href="#L" x="1231"/><use href="#L" x="1360"/><use href="#L" x="1406"/><use href="#L" x="1453"/><use href="#L" x="1500"/><use href="#L" x="1546"/><use href="#L" x="1593"/><use href="#L" x="1640"/></g>
<path d="M371 737.700H1720" stroke="#b0b0b0" stroke-width="3" stroke-dasharray="14 1 3 1"/>
<g transform="translate(0,754)"><rect x="861" width="23" fill="#f2b552"/><rect x="866" y="3" width="14" style="height:12px;stroke:none" fill="#46b858"/><text x="873" y="13" font-size="10" fill="#dfd" text-anchor="middle">FX</text>
<rect x="1193" width="146" fill="#353535"/><rect x="1311" width="28" y="0" fill="#666"/><rect x="1193" width="17" fill="#666"/><path d="M1311 10h28" stroke="#222"/><rect x="1200" y="3" width="12" style="height:12px;stroke:none" fill="#c4504e"/><rect x="1222" y="3" width="13" style="height:12px;stroke:none" fill="#c4504e"/><text x="1206" y="13.500" font-size="11" fill="#eee" text-anchor="middle">M</text><text x="1228.500" y="13.500" font-size="11" fill="#eee" text-anchor="middle">M</text>
<rect x="1414" width="23" fill="#f2b552"/><rect x="1422" y="3" width="13.500" style="height:12px;stroke:none" fill="#46b858"/><text x="1428.700" y="13" font-size="10" fill="#dfd" text-anchor="middle">FX</text></g>
<g transform="translate(0,778)" fill="url(#s1)"><rect x="371" width="1352"/><use href="#L" x="386"/><use href="#L" x="433"/><use href="#L" x="479"/><use href="#L" x="526"/><use href="#L" x="572"/><use href="#L" x="619"/><use href="#L" x="666"/><use href="#L" x="712"/><use href="#L" x="759"/><use href="#L" x="805"/><use href="#L" x="852"/><use href="#L" x="898"/><use href="#L" x="945"/><use href="#L" x="991"/><use href="#L" x="1044"/><use href="#L" x="1091"/><use href="#L" x="1138"/><use href="#L" x="1185"/><use href="#L" x="1231"/><use href="#L" x="1278"/><use href="#L" x="1325"/><use href="#L" x="1360"/><use href="#L" x="1406"/><use href="#L" x="1453"/><use href="#L" x="1500"/><use href="#L" x="1546"/><use href="#L" x="1593"/><use href="#L" x="1640"/><use href="#L" x="1686"/></g>
<g transform="translate(0,802)" fill="url(#p2)"><rect x="418" width="139"/><rect x="791" width="231"/><rect x="1169" width="140"/><rect x="1345" width="139"/><rect x="1577" width="88"/><rect x="1670" width="54"/>
<g fill="#f4f052"><rect x="1204" width="11"/><rect x="1384" width="6"/><rect x="1565" width="12"/><rect x="1665" width="5"/></g>
<path d="M418 20L557 1M1670 0l54 20M1565 20l12-20" stroke="#a33" fill="none"/>
<use href="#L" x="433"/><use href="#L" x="479"/><use href="#L" x="526"/><use href="#L" x="805"/><use href="#L" x="852"/><use href="#L" x="898"/><use href="#L" x="945"/><use href="#L" x="991"/><use href="#L" x="1185"/><use href="#L" x="1231"/><use href="#L" x="1278"/><use href="#L" x="1360"/><use href="#L" x="1406"/><use href="#L" x="1453"/><use href="#L" x="1593"/><use href="#L" x="1640"/><use href="#L" x="1686"/></g>
<g transform="translate(0,826)" fill="url(#s3)"><rect x="464" width="326"/><rect x="985" width="37" fill="#f2a0a0"/><rect x="1030" width="640"/>
<path d="M464 20q60-2 94-20M1123 18q50 0 92-18M1624 0l46 20" stroke="#a33" fill="none"/>
<use href="#L" x="479"/><use href="#L" x="526"/><use href="#L" x="572"/><use href="#L" x="619"/><use href="#L" x="666"/><use href="#L" x="712"/><use href="#L" x="759"/><use href="#L" x="1045"/><use href="#L" x="1091"/><use href="#L" x="1138"/><use href="#L" x="1185"/><use href="#L" x="1231"/><use href="#L" x="1278"/><use href="#L" x="1325"/><use href="#L" x="1360"/><use href="#L" x="1406"/><use href="#L" x="1453"/><use href="#L" x="1500"/><use href="#L" x="1546"/><use href="#L" x="1593"/><use href="#L" x="1640"/></g>
<g transform="translate(0,850)" fill="url(#s4)"><rect x="604" width="94"/><rect x="1076" width="93"/><use href="#L" x="619"/><use href="#L" x="666"/><use href="#L" x="1091"/><use href="#L" x="1138"/></g>
<g transform="translate(0,874)" fill="url(#s5)"><rect x="651" width="139"/><rect x="1391" width="186"/><path d="M651 20l48-20M700 0l45 20M745 0l45 20M1391 20q30-4 43-20M1438 0l46 20M1484 0l46 20M1530 0l47 20" stroke="#a33" fill="none"/>
<use href="#L" x="666"/><use href="#L" x="712"/><use href="#L" x="759"/><use href="#L" x="1406"/><use href="#L" x="1453"/><use href="#L" x="1500"/><use href="#L" x="1546"/></g>
<g transform="translate(0,898)" fill="url(#s6)"><rect x="791" width="239"/><rect x="1216" width="123"/><rect x="1345" width="232"/><rect x="1625" width="99"/><path d="M1670 0l54 20" stroke="#a33" fill="none"/>
<use href="#L" x="805"/><use href="#L" x="852"/><use href="#L" x="898"/><use href="#L" x="945"/><use href="#L" x="991"/><use href="#L" x="1231"/><use href="#L" x="1278"/><use href="#L" x="1360"/><use href="#L" x="1406"/><use href="#L" x="1453"/><use href="#L" x="1500"/><use href="#L" x="1546"/><use href="#L" x="1640"/><use href="#L" x="1686"/></g>
<g transform="translate(0,922)"><g fill="url(#sW)"><rect x="884" width="140"/></g><g fill="url(#p7)"><rect x="1216" width="129"/><rect x="1438" width="92"/></g><rect x="1625" width="45" fill="#7f5f85"/><rect x="1671" width="46" fill="#666"/><path d="M1671 10h46" stroke="#333"/>
<rect x="1632" y="3" width="12" style="height:13px;stroke:none" fill="#c4504e"/><text x="1638" y="14" font-size="11" fill="#eee" text-anchor="middle">M</text><rect x="1678" y="3" width="12" style="height:13px;stroke:none" fill="#c4504e"/><text x="1684" y="14" font-size="11" fill="#eee" text-anchor="middle">M</text>
<use href="#L" x="899"/><use href="#L" x="946"/><use href="#L" x="992"/><use href="#L" x="1231"/><use href="#L" x="1278"/><use href="#L" x="1325"/><use href="#L" x="1453"/><use href="#L" x="1500"/><use href="#L" x="1655"/></g>
<g transform="translate(0,946)"><rect x="1076" width="94" fill="url(#s8)"/><rect x="1170" width="34" fill="#a0d8a0"/><path d="M1170 5h34" stroke="#555" stroke-dasharray="1 2"/><path d="M1170 12h34" stroke="#555"/><rect x="1578" width="92" fill="#f2a0a0"/><path d="M1578 3h92" stroke="#a33"/><path d="M1578 9h92" stroke="#b77" stroke-dasharray="3 8"/><use href="#L" x="1091"/><use href="#L" x="1138"/></g>
</g>

<!-- marker lines -->
<g class="cr">
<path d="M418 97V1062" stroke="#7fd07f"/>
<path fill="none" stroke="#f00" d="M452 97V1062M507 97V1062M546 97V1062M600 97V1062M691 97V1062M737 97V1062M772 97V1062M784 97V1062M871.500 97V1062M924 97V1062M971 97V1062M1006.500 97V1062M1017.500 97V1062M1064.500 97V1062M1116.300 97V1062M1152 97V1062M1163 97V1062M1192.500 97V1062M1291.500 97V1062M1303.300 97V1062M1332.200 97V1062M1379 97V1062M1431.500 97V1062M1472.200 97V1062M1524.500 97V1062M1559.600 97V1062M1571.400 97V1062M1618.400 97V1062M1659.600 97V1062"/>
<path fill="none" stroke="#a80000" d="M371 97V1062M463 97V1062M510 97V1062M557 97V1062M603 97V1062M650 97V1062M697 97V1062M743 97V1062M836 97V1062M860 97V1062M883.500 97V1062M930 97V1062M977 97V1062M1023 97V1062M1029.400 97V1062M1075.500 97V1062M1122.400 97V1062M1169.400 97V1062M1186.500 97V1062M1215.500 97V1062M1262.400 97V1062M1309.400 97V1062M1344.500 97V1062M1390.200 97V1062M1437.600 97V1062M1484 97V1062M1530.200 97V1062M1577 97V1062M1624 97V1062"/>
<path d="M790 97V1062" stroke="#7ff"/><path d="M1204.500 97V1062" stroke="#ffe92a"/><path d="M1670 97V1062" stroke="#fff"/>
<path d="M1723 84V1062" stroke="#9a9f9e"/>
</g>

<!-- marker flags -->
<g transform="translate(0,107)">
<text class="l" x="382" y="0">intro</text><text class="l" x="429" y="0">ba…</text><text class="l" x="474" y="0">bd</text><text class="l" x="522" y="0">op …</text><text class="l" x="569" y="0">instr…</text><text class="l" x="623" y="0">inst</text><text class="l" x="717" y="0">in…</text><text class="l" x="810" y="0">bre…</text><text class="l" x="903" y="0">in…</text><text class="l" x="950" y="0">in…</text><text class="l" x="1049" y="0">i…</text><text class="l" x="1095" y="0">in…</text><text class="l" x="1142" y="0">i…</text><text class="l" x="1411" y="0">in…</text><text class="l" x="1457" y="0">i…</text><text class="l" x="1504" y="0">in…</text><text class="l" x="1550" y="0">c…</text><text class="l" x="1597" y="0">ch…</text><text class="l" x="1644" y="0">+…</text><text class="l" x="1691" y="0">outro</text>
<rect class="f" x="371.500" width="10" style="fill:#fff"/><text class="m" x="376.500" style="fill:#111">1</text>
<rect class="f" x="418" width="10" style="fill:#7fc97f"/><text class="m" x="423" style="fill:#124">2</text>
<rect class="f r" x="452" width="11"/><text class="m" x="457.500">3</text><rect class="f d" x="463" width="11"/><text class="m" x="468.500">4</text>
<rect class="f r" x="507" width="8"/><rect class="f d" x="510" width="11"/><text class="m" x="515.500">6</text>
<rect class="f r" x="546" width="11"/><text class="m" x="551.500">7</text><rect class="f d" x="557" width="11"/><text class="m" x="562.500">8</text>
<rect class="f r" x="600" width="8"/><rect class="f d" x="603" width="19"/><text class="m" x="612.500">10</text>
<rect class="f d" x="650" width="19"/><text class="m" x="659.500">11</text>
<rect class="f r" x="691" width="8"/><rect class="f d" x="697" width="19"/><text class="m" x="706.500">13</text>
<rect class="f r" x="737" width="8"/><rect class="f d" x="743" width="19"/><text class="m" x="752.500">15</text>
<rect class="f r" x="772" width="18"/><text class="m" x="781">16</text>
<rect class="f" x="790" width="19" style="fill:#7ff"/><text class="m" x="799.500" style="fill:#111">18</text>
<rect class="f d" x="836" width="19"/><text class="m" x="845.500">19</text>
<rect class="f d" x="860" width="19"/><rect class="f r" x="871" width="14"/><text class="m" x="878">21</text><rect class="f d" x="884" width="19"/><text class="m" x="893.500">22</text>
<rect class="f r" x="924" width="8"/><rect class="f d" x="930" width="19"/><text class="m" x="939.500">24</text>
<rect class="f r" x="971" width="8"/><rect class="f d" x="977" width="19"/><text class="m" x="986.500">26</text>
<rect class="f r" x="1006.500" width="14"/><rect class="f r" x="1017.500" width="8"/><rect class="f d" x="1023" width="8"/><rect class="f d" x="1029" width="19"/><text class="m" x="1038.500">30</text>
<rect class="f r" x="1064.500" width="12"/><rect class="f d" x="1075.500" width="19"/><text class="m" x="1085">32</text>
<rect class="f r" x="1116.300" width="8"/><rect class="f d" x="1122.400" width="19"/><text class="m" x="1132">34</text>
<rect class="f r" x="1152" width="12"/><rect class="f r" x="1163" width="8"/><rect class="f d" x="1169.400" width="19"/><text class="m" x="1179">37</text>
<rect class="f d" x="1186.500" width="8"/><rect class="f r" x="1192.500" width="13"/>
<rect class="f" x="1204.500" width="12" style="fill:#ffd91a"/><text class="m" x="1210" style="fill:#111">4</text>
<rect class="f d" x="1215.500" width="19"/><text class="m" x="1225">41</text>
<rect class="f d" x="1262.400" width="19"/><text class="m" x="1272">42</text>
<rect class="f r" x="1291.500" width="14"/><text class="m" x="1297">43</text><rect class="f r" x="1303.300" width="8"/><rect class="f d" x="1309.400" width="19"/><text class="m" x="1319">45</text>
<rect class="f r" x="1332.200" width="14"/><text class="m" x="1338">46</text><rect class="f d" x="1344.500" width="19"/><text class="m" x="1354">47</text>
<rect class="f r" x="1379" width="14"/><rect class="f d" x="1390.200" width="19"/><text class="m" x="1400">49</text>
<rect class="f r" x="1431.500" width="8"/><rect class="f d" x="1437.600" width="19"/><text class="m" x="1447">51</text>
<rect class="f r" x="1472.200" width="14"/><rect class="f d" x="1484" width="19"/><text class="m" x="1493.500">53</text>
<rect class="f r" x="1524.500" width="8"/><rect class="f d" x="1530.200" width="19"/><text class="m" x="1540">55</text>
<rect class="f r" x="1559.600" width="14"/><rect class="f r" x="1571.400" width="8"/><rect class="f d" x="1577" width="19"/><text class="m" x="1586.500">58</text>
<rect class="f r" x="1618.400" width="8"/><rect class="f d" x="1624" width="19"/><text class="m" x="1633.500">60</text>
<rect class="f r" x="1659.600" width="12"/><rect class="f" x="1670" width="19" style="fill:#fff"/><text class="m" x="1679.500" style="fill:#111">62</text>
</g>

<!-- TCP column -->
<rect x="348" y="154" width="14" height="908" fill="#2b2b2b"/>
<g transform="translate(0,154)"><rect x="2" width="328" height="23" fill="#b5c18e"/><use href="#nf"/><text class="n" x="31" y="15.600" textLength="55" lengthAdjust="spacingAndGlyphs">GOA CTRL</text><use href="#c"/><use href="#p0"/><use href="#on"/><rect x="330.700" width="17.300" height="23" fill="#b8e23c"/><text class="no" x="339.300" y="16" fill="#111">17</text></g>
<g transform="translate(0,178)"><path d="M2 0h328v23H13l-11-9z" fill="#b5c18e"/><use href="#nf"/><text class="n" x="31" y="15.600">// FX</text><use href="#c"/><use href="#p0"/><use href="#on"/><use href="#fc"/><path d="M330.700 23v-4q2-3 8.600-3t8.700 3v4z" fill="#ecf040"/><text class="no" x="339.300" y="24" fill="#111">27</text></g>
<g transform="translate(0,202)"><rect x="15" width="315" height="23" fill="#b6bf8e"/><use href="#nc"/><text class="n" x="44" y="15.600">FX 1 Ambience</text><use href="#c"/><use href="#p1"/><use href="#on"/><rect x="330.700" width="17.300" height="23" fill="#ecf040"/><text class="no" x="339.300" y="16" fill="#111">28</text></g>
<g transform="translate(0,226)"><rect x="15" width="315" height="23" fill="#b6bf8e"/><use href="#nc"/><text class="n" x="44" y="15.600">FX 2 Impacts</text><use href="#c"/><use href="#p0"/><use href="#off"/><rect x="330.700" width="17.300" height="23" fill="#ecf040"/><text class="no" x="339.300" y="16" fill="#111">29</text></g>
<g transform="translate(0,250)"><rect x="15" width="315" height="23" fill="#b6bf8e"/><use href="#nc"/><text class="n" x="44" y="15.600">FX 3 Risers</text><use href="#c"/><use href="#p1"/><use href="#off"/><rect x="330.700" width="17.300" height="23" fill="#ecf040"/><text class="no" x="339.300" y="16" fill="#111">30</text></g>
<g transform="translate(0,274)"><rect x="15" width="315" height="23" fill="#b6bf8e"/><use href="#nc"/><text class="n" x="44" y="15.600">FX 4 Falls</text><use href="#c"/><use href="#p1"/><use href="#on"/><rect x="330.700" width="17.300" height="23" fill="#ecf040"/><text class="no" x="339.300" y="16" fill="#111">31</text></g>
<g transform="translate(0,298)"><rect x="15" width="315" height="23" fill="#b6bf8e"/><use href="#nc"/><text class="n" x="44" y="15.600">FX 5 Vox</text><use href="#c"/><use href="#p1"/><use href="#off"/><rect x="330.700" width="17.300" height="23" fill="#ecf040"/><text class="no" x="339.300" y="16" fill="#111">32</text></g>
<g transform="translate(0,322)"><rect x="15" width="315" height="23" fill="#b6bf8e"/><use href="#nc"/><text class="n" x="44" y="15.600">FX 6 Hit</text><use href="#c"/><use href="#p1"/><use href="#off"/><rect x="330.700" width="17.300" height="23" fill="#ecf040"/><text class="no" x="339.300" y="16" fill="#111">33</text></g>
<g transform="translate(0,346)"><rect x="15" width="315" height="23" fill="#b6bf8e"/><use href="#nc"/><text class="n" x="44" y="15.600">FX 7 Various</text><use href="#c"/><use href="#p1"/><use href="#on"/><rect x="330.700" width="17.300" height="23" fill="#ecf040"/><text class="no" x="339.300" y="16" fill="#111">34</text></g>
<g transform="translate(0,370)"><rect x="15" width="315" height="23" fill="#b6bf8e"/><use href="#nc"/><text class="n" x="44" y="15.600">FX 8 Msg</text><use href="#c"/><use href="#p1"/><use href="#on"/><rect x="330.700" width="17.300" height="23" fill="#ecf040"/><text class="no" x="339.300" y="16" fill="#111">35</text></g>
<g transform="translate(0,394)"><rect x="15" width="315" height="23" fill="#b6bf8e"/><use href="#nc"/><text class="n" x="44" y="15.600">FX 9 Msg Sidech</text><use href="#c"/><use href="#p1"/><use href="#on"/><path d="M330.700 0H348v18q-3 4-8.700 4t-8.600-4z" fill="#ecf040"/><path d="M335 17v-5h3l1 1h4v4z" fill="#a8a440"/></g>
<g transform="translate(0,418)"><rect x="2" width="328" height="23" fill="#8fad90"/><use href="#nf"/><text class="n" x="31" y="15.600" textLength="71" lengthAdjust="spacingAndGlyphs">ENERGY CTRL</text><use href="#c"/><use href="#p0"/><use href="#on"/><rect x="330.700" width="17.300" height="23" fill="#4f971f"/><text class="no" x="339.300" y="16" fill="#eee">37</text></g>
<g transform="translate(0,442)"><rect x="2" width="328" height="23" fill="#8fad90"/><use href="#nf"/><text class="n" x="31" y="15.600" textLength="59" lengthAdjust="spacingAndGlyphs">BASSDRUM</text><use href="#c"/><use href="#p1"/><path d="M136 7a9.300 9.300 0 0 1 5-4" fill="none" stroke="#1fb85c" stroke-width="2"/><use href="#on"/><rect x="330.700" width="17.300" height="23" fill="#4f971f"/><text class="no" x="339.300" y="16" fill="#eee">38</text></g>
<g transform="translate(0,466)"><rect x="2" width="328" height="23" fill="#8fad90"/><use href="#nf"/><text class="n" x="31" y="15.600" textLength="49" lengthAdjust="spacingAndGlyphs">BASSLINE</text><use href="#c"/><use href="#p1"/><path d="M152 17a9.300 9.300 0 0 1-5 4" fill="none" stroke="#1fb85c" stroke-width="2"/><use href="#on"/><rect x="330.700" width="17.300" height="23" fill="#4f971f"/><text class="no" x="339.300" y="16" fill="#eee">39</text></g>
<g transform="translate(0,490)"><path d="M2 0h328v23H13l-11-9z" fill="#bd8f8f"/><use href="#nf"/><text class="n" x="31" y="15.600" textLength="53" lengthAdjust="spacingAndGlyphs">// DRUMS</text><use href="#c"/><use href="#p0"/><use href="#on"/><use href="#fc"/><path d="M330.700 23v-4q2-3 8.600-3t8.700 3v4z" fill="#e02020"/><text class="no" x="339.300" y="24" fill="#fff">42</text></g>
<g transform="translate(0,514)"><rect x="15" width="315" height="23" fill="#c29292"/><use href="#nc"/><text class="n" x="44" y="15.600">DR Crash</text><use href="#c"/><use href="#p1"/><use href="#k" color="#d23030"/><use href="#on"/><rect x="330.700" width="17.300" height="23" fill="#f35454"/><text class="no" x="339.300" y="16" fill="#fff">43</text></g>
<g transform="translate(0,538)"><rect x="15" width="315" height="23" fill="#c29292"/><use href="#nc"/><text class="n" x="44" y="15.600">DR Crash Rev</text><use href="#c"/><use href="#p1"/><use href="#k" color="#d23030"/><use href="#on"/><rect x="330.700" width="17.300" height="23" fill="#f35454"/><text class="no" x="339.300" y="16" fill="#fff">44</text></g>
<g transform="translate(0,562)"><rect x="15" width="315" height="23" fill="#c29292"/><use href="#nc"/><text class="n" x="44" y="15.600">DR Sd Roll</text><use href="#c"/><use href="#p1"/><use href="#k" color="#d23030"/><use href="#on"/><rect x="330.700" width="17.300" height="23" fill="#f35454"/><text class="no" x="339.300" y="16" fill="#fff">45</text></g>
<g transform="translate(0,586)"><rect x="15" width="315" height="23" fill="#bd8b8b"/><use href="#nc"/><text class="n" x="44" y="15.600">DR Closed Hat</text><use href="#c"/><use href="#p1"/><use href="#k" color="#d23030"/><use href="#on"/><rect x="330.700" width="17.300" height="23" fill="#e02424"/><text class="no" x="339.300" y="16" fill="#fff">46</text></g>
<g transform="translate(0,610)"><rect x="15" width="315" height="23" fill="#bd8b8b"/><use href="#nc"/><text class="n" x="44" y="15.600">DR Open Hat</text><use href="#c"/><use href="#p1"/><use href="#k" color="#d23030"/><use href="#on"/><rect x="330.700" width="17.300" height="23" fill="#e02424"/><text class="no" x="339.300" y="16" fill="#fff">47</text></g>
<g transform="translate(0,634)"><rect x="15" width="315" height="23" fill="#b5b17f"/><use href="#nc"/><text class="n" x="44" y="15.600">DR Tambourine</text><use href="#c"/><use href="#pk"/><path d="M140 12h6" stroke="#222" stroke-width="1.300"/><use href="#k" color="#d23030"/><use href="#on"/><rect x="330.700" width="17.300" height="23" fill="#e3b61e"/><text class="no" x="339.300" y="16" fill="#333">48</text></g>
<g transform="translate(0,658)"><rect x="15" width="315" height="23" fill="#a88a8a"/><use href="#nc"/><text class="n" x="44" y="15.600">DR Snare</text><use href="#c"/><use href="#p1"/><use href="#k" color="#d23030"/><use href="#on"/><rect x="330.700" width="17.300" height="23" fill="#8c2020"/><text class="no" x="339.300" y="16" fill="#eee">49</text></g>
<g transform="translate(0,682)"><rect x="15" width="315" height="23" fill="#928a8a"/><use href="#nc"/><text class="n" x="44" y="15.600">DR Loop</text><use href="#c"/><use href="#p1"/><use href="#k" color="#d23030"/><use href="#off"/><rect x="330.700" width="17.300" height="23" fill="#561a1a"/><text class="no" x="339.300" y="16" fill="#eee">50</text></g>
<g transform="translate(0,706)"><rect x="15" width="315" height="23" fill="#928a8a"/><use href="#nc"/><text class="n" x="44" y="15.600">DR Tom</text><use href="#c"/><use href="#p1"/><use href="#k" color="#d23030"/><use href="#off"/><rect x="330.700" width="17.300" height="23" fill="#561a1a"/><text class="no" x="339.300" y="16" fill="#eee">51</text></g>
<g transform="translate(0,730)"><path d="M2 0h328v23H13l-11-9z" fill="#cfc19e"/><use href="#nf"/><text class="n" x="31" y="15.600">// GOA</text><use href="#c"/><use href="#p0"/><use href="#on"/><use href="#fc"/><path d="M330.700 23v-4q2-3 8.600-3t8.700 3v4z" fill="#e8a84a"/><text class="no" x="339.300" y="24" fill="#333">58</text></g>
<g transform="translate(0,754)"><rect x="15" width="315" height="23" fill="#a4aeac"/><use href="#nc"/><text class="n" x="44" y="15.600">Audio 1</text><use href="#c"/><use href="#p1"/><use href="#k" color="#c8703f"/><use href="#off"/><rect x="330.700" width="17.300" height="23" fill="#8a9492"/><text class="no" x="339.300" y="16" fill="#e4e4e4">59</text></g>
<g transform="translate(0,778)"><rect x="15" width="315" height="23" fill="#a4aeac"/><use href="#nc"/><text class="n" x="44" y="15.600">Midi 1 Liquid</text><use href="#c"/><use href="#p0"/><use href="#off"/><rect x="330.700" width="17.300" height="23" fill="#8a9492"/><text class="no" x="339.300" y="16" fill="#e4e4e4">60</text></g>
<g transform="translate(0,802)"><rect x="15" width="315" height="23" fill="#a4aeac"/><use href="#nc"/><text class="n" x="44" y="15.600">Midi 2 Dune</text><use href="#c"/><use href="#p0"/><use href="#off"/><rect x="330.700" width="17.300" height="23" fill="#8a9492"/><text class="no" x="339.300" y="16" fill="#e4e4e4">61</text></g>
<g transform="translate(0,826)"><rect x="15" width="315" height="23" fill="#a4aeac"/><use href="#nc"/><text class="n" x="44" y="15.600">Midi 3 Arp</text><use href="#c"/><use href="#p0"/><use href="#off"/><rect x="330.700" width="17.300" height="23" fill="#8a9492"/><text class="no" x="339.300" y="16" fill="#e4e4e4">62</text></g>
<g transform="translate(0,850)"><rect x="15" width="315" height="23" fill="#a4aeac"/><use href="#nc"/><text class="n" x="44" y="15.600">Midi 4 Support</text><use href="#c"/><use href="#p0"/><use href="#off"/><rect x="330.700" width="17.300" height="23" fill="#8a9492"/><text class="no" x="339.300" y="16" fill="#e4e4e4">63</text></g>
<g transform="translate(0,874)"><rect x="15" width="315" height="23" fill="#a4aeac"/><use href="#nc"/><text class="n" x="44" y="15.600">Midi 5 Virus</text><use href="#c"/><use href="#p0"/><use href="#off"/><rect x="330.700" width="17.300" height="23" fill="#8a9492"/><text class="no" x="339.300" y="16" fill="#e4e4e4">64</text></g>
<g transform="translate(0,898)"><rect x="15" width="315" height="23" fill="#a4aeac"/><use href="#nc"/><text class="n" x="44" y="15.600">Midi 6 FM Seq</text><use href="#c"/><use href="#p0"/><use href="#off"/><rect x="330.700" width="17.300" height="23" fill="#8a9492"/><text class="no" x="339.300" y="16" fill="#e4e4e4">65</text></g>
<g transform="translate(0,922)"><rect x="15" width="315" height="23" fill="#a4aeac"/><use href="#nc"/><text class="n" x="44" y="15.600">Midi 7 Acid_bs</text><use href="#c"/><use href="#p0"/><use href="#off"/><rect x="330.700" width="17.300" height="23" fill="#8a9492"/><text class="no" x="339.300" y="16" fill="#e4e4e4">66</text></g>
<g transform="translate(0,946)"><rect x="15" width="315" height="23" fill="#a4aeac"/><use href="#nc"/><text class="n" x="44" y="15.600">Midi 8 Vox</text><use href="#c"/><use href="#p0"/><use href="#off"/><rect x="330.700" width="17.300" height="23" fill="#8a9492"/><text class="no" x="339.300" y="16" fill="#e4e4e4">67</text></g>
<g transform="translate(0,970)"><rect x="15" width="315" height="23" fill="#a4aeac"/><use href="#nc"/><text class="n" x="44" y="15.600">Midi 9</text><use href="#c"/><use href="#p0"/><use href="#off"/><rect x="330.700" width="17.300" height="23" fill="#8a9492"/><text class="no" x="339.300" y="16" fill="#e4e4e4">68</text></g>
<g transform="translate(0,994)"><rect x="15" width="315" height="23" fill="#a4aeac"/><use href="#nc"/><text class="n" x="44" y="15.600">Instr 1 Liquid</text><use href="#c"/><use href="#p1"/><use href="#k" color="#c8703f"/><use href="#on"/><rect x="330.700" width="17.300" height="23" fill="#8a9492"/><text class="no" x="339.300" y="16" fill="#e4e4e4">69</text></g>
<g transform="translate(0,1018)"><rect x="15" width="315" height="23" fill="#a4aeac"/><use href="#nc"/><text class="n" x="44" y="15.600">Instr 2 Dune L1</text><use href="#c"/><use href="#p0"/><use href="#k" color="#c8703f"/><use href="#on"/><rect x="330.700" width="17.300" height="23" fill="#8a9492"/><text class="no" x="339.300" y="16" fill="#e4e4e4">70</text></g>
<g transform="translate(0,1042)"><rect x="15" width="315" height="23" fill="#a4aeac"/><use href="#nc"/><text class="n" x="44" y="15.600">Instr 2 Dune L2</text><use href="#c"/><use href="#p0"/><use href="#k" color="#c8703f"/><use href="#on"/><rect x="330.700" width="17.300" height="23" fill="#8a9492"/><text class="no" x="339.300" y="16" fill="#e4e4e4">71</text></g>

<!-- bottom bars -->
<rect y="1060" width="371" height="20" fill="#333"/><rect x="6" y="1061" width="357" height="1" fill="#777"/>
<rect x="371" y="1062" width="1459" height="18" fill="#333"/>
<circle cx="378" cy="1070" r="5" fill="#222"/><path d="M376 1068l4 2-4 2z" fill="#666"/>
<rect x="392" y="1065" width="943" height="10" rx="5" fill="#4a4a4a"/><rect x="392" y="1065" width="943" height="2" rx="1" fill="#565656"/><circle cx="861" cy="1074" r="1.500" fill="#222"/><circle cx="1329" cy="1070" r="2.500" fill="#1c1c1c"/>
<path d="M1781 1068h5v-3h2v3h4v2h-4v4h-2v-4h-5zM1797 1069h8v2h-8z" fill="#666"/>
<rect x="1809" y="154" width="21" height="908" fill="#333"/>
<circle cx="1817" cy="162" r="5" fill="#222"/><path d="M1814.500 163l2.500-3 2.500 3z" fill="#666"/>
<rect x="1812" y="173" width="10" height="637" rx="5" fill="#4b4b4b"/><rect x="1813" y="490" width="7" height="2" fill="#111"/>
<circle cx="1817" cy="1018" r="5" fill="#1c1c1c"/><path d="M1815 1017h4l-2 3z" fill="#555"/><path d="M1814 1034h7M1817.500 1030v8" stroke="#666" stroke-width="2"/><path d="M1813 1044h8" stroke="#555"/><path d="M1813 1054h8" stroke="#666" stroke-width="2"/>

<!-- right panel -->
<rect x="1830" y="154" width="90" height="926" fill="#343434"/>
<rect x="1831" y="192" width="88" height="175" fill="#2f2f2f"/><path d="M1831 208h88M1831 224h88M1831 240h88M1831 256h88M1831 272h88M1831 288h88M1831 304h88M1831 320h88M1831 336h88M1831 352h88" stroke="#333"/>
<rect x="1830" y="84" width="90" height="70" fill="#343434"/>
<g fill="#2c2c2c" stroke="#222"><rect x="1832.500" y="83.500" width="85" height="13"/><rect x="1832.500" y="99.500" width="85" height="13"/><rect x="1832.500" y="115.500" width="85" height="13"/><rect x="1832.500" y="131.500" width="85" height="13"/><rect x="1832.500" y="147.500" width="85" height="13"/><rect x="1832.500" y="163.500" width="85" height="13"/><rect x="1832.500" y="179.500" width="85" height="13"/></g>
<text class="fl" x="1875" y="94" style="fill:#a8a8a8" textLength="76" lengthAdjust="spacingAndGlyphs">Limitless 138 BPM</text><text class="fl" x="1875" y="110" textLength="80" lengthAdjust="spacingAndGlyphs">Pink Noise Genera</text><text class="fl" x="1875" y="126">SPAN</text><text class="fl" x="1875" y="142" textLength="80" lengthAdjust="spacingAndGlyphs">NUGEN Visualizer2</text><text class="fl" x="1875" y="158" textLength="80" lengthAdjust="spacingAndGlyphs">NUGEN MasterChe</text><text class="fl" x="1875" y="174">iZotope Insight</text><text class="fl" x="1875" y="190">Gain Control</text>
<rect x="1854" y="372" width="41" height="1" fill="#555"/>
<g fill="#2c2c2c" stroke="#232323"><rect x="1833" y="381" width="85" height="22" rx="11"/><rect x="1833" y="409" width="85" height="22" rx="11"/><rect x="1833" y="437" width="85" height="22" rx="11"/><rect x="1833" y="465" width="85" height="22" rx="11"/><rect x="1833" y="493" width="85" height="22" rx="11"/><rect x="1833" y="521" width="85" height="22" rx="11"/></g>
<g fill="none" stroke="#8a8a8a" stroke-width="2.200"><path d="M1850 400a8.500 8.500 0 0 1 0-14"/><path d="M1841 429a8.500 8.500 0 1 1 10 0"/><path d="M1841 457a8.500 8.500 0 1 1 10 0"/><path d="M1841 485a8.500 8.500 0 1 1 10 0"/><path d="M1850 512a8.500 8.500 0 0 1 0-14"/><path d="M1850 540a8.500 8.500 0 0 1 0-14"/></g>
<text class="kt" x="1859" y="391">Input Trim</text><text class="kt" x="1859" y="401">0.0dB</text><text class="kt" x="1859" y="419">Threshold</text><text class="kt" x="1859" y="429">0.0dB</text><text class="kt" x="1859" y="447">Ceiling</text><text class="kt" x="1859" y="457">0.0dB</text><text class="kt" x="1859" y="475">Bypass</text><text class="kt" x="1859" y="485">bypassed</text><text class="kt" x="1859" y="503">Target Loudn</text><text class="kt" x="1859" y="513">-8.6</text><text class="kt" x="1859" y="531">Gain (dB)</text><text class="kt" x="1859" y="541">-6.0</text>

<!-- master -->
<rect x="1854" y="637" width="41" height="1" fill="#555"/>
<rect x="1834" y="647" width="18" height="30" fill="#222"/><rect x="1835" y="648" width="16" height="14" fill="#b8cfc4"/><rect x="1835" y="662" width="16" height="15" fill="#1eb967"/><text x="1843" y="674" font-size="10.500" font-weight="bold" fill="#fff" text-anchor="middle">FX</text><path d="M1840 653a3.500 3.500 0 1 0 6 0M1843 651v4" fill="none" stroke="#0c8f50" stroke-width="1.200"/>
<rect x="1855" y="647" width="34" height="30" fill="#222" stroke="#111"/><rect x="1856" y="648" width="32" height="12" fill="#333"/><text x="1864" y="658" font-size="9" font-weight="bold" fill="#0a8f50" text-anchor="middle">M</text><text x="1874" y="658" font-size="9" fill="#444" text-anchor="middle">R</text><text x="1881" y="658" font-size="9" font-weight="bold" fill="#0a87a8" text-anchor="middle">S</text><text x="1872" y="673" font-size="9" fill="#aaa" text-anchor="middle">ROUTE</text>
<rect x="1892" y="647" width="24" height="30" fill="#3a3a3a"/><rect x="1895" y="650" width="18" height="13" fill="#99a6a4"/><path d="M1897 652l5 4.500-5 4.500zM1911 652l-5 4.500 5 4.500z" fill="#333"/><text x="1904" y="673" font-size="8.500" fill="#aaa" text-anchor="middle">MONO</text>
<text x="1875.500" y="693" font-size="12" fill="#8fa1b6" text-anchor="middle">MASTER</text>
<rect x="1831" y="700" width="89" height="355" fill="#cfd4d4"/><rect x="1831" y="1055" width="89" height="20" fill="#7e8685"/><rect x="1835" y="1073" width="85" height="1" fill="#333"/>
<circle cx="1874" cy="715" r="7.500" fill="url(#kw)" stroke="#555"/><path d="M1874 710v4" stroke="#333"/><text x="1874" y="735" font-size="10" fill="#555" text-anchor="middle">center</text>
<rect x="1837" y="742" width="56" height="306" rx="3" fill="#2b2b2b"/><path d="M1893 1030v18h-10z" fill="#cfd4d4"/>
<text x="1864" y="757" font-size="10.500" fill="#555" text-anchor="middle">0.00dB</text>
<rect x="1841" y="817" width="7" height="24" fill="#0d8a50"/><rect x="1862" y="817" width="7" height="24" fill="#0d8a50"/>
<text class="sc" x="1855" y="768" textLength="28" lengthAdjust="spacingAndGlyphs" style="fill:#888">-11¦11¦</text>
<text class="sc" x="1856" y="798">-6-</text><text class="sc" x="1856" y="832">-12-</text><text class="sc" x="1856" y="866">-18-</text><text class="sc" x="1856" y="901">-24-</text><text class="sc" x="1856" y="935">-30-</text><text class="sc" x="1856" y="968">-36-</text><text class="sc" x="1856" y="1003">-42-</text><text class="sc" x="1856" y="1037">-48-</text>
<text class="sc" x="1844" y="810">6</text><text class="sc" x="1867" y="810">6</text><text class="sc" x="1845" y="843">0-</text><text class="sc" x="1866" y="843">-0</text><text class="sc" x="1846" y="877">6-</text><text class="sc" x="1865" y="877">-6</text><text class="sc" x="1848" y="911">12-</text><text class="sc" x="1866" y="911">I2</text><text class="sc" x="1848" y="946">18-</text><text class="sc" x="1866" y="946">I8</text><text class="sc" x="1848" y="981">24-</text><text class="sc" x="1866" y="981">24</text><text class="sc" x="1848" y="1015">30-</text><text class="sc" x="1866" y="1015">30</text>
<text x="1855" y="1043" font-size="10" fill="#fff" font-weight="bold" text-anchor="middle" textLength="28" lengthAdjust="spacingAndGlyphs">-11:111</text>
<path d="M1880.500 790V1038" stroke="#000"/>
<rect x="1874" y="763" width="13" height="30" rx="2" fill="url(#fd)" stroke="#222"/><path d="M1875 776h11" stroke="#333"/>
<rect x="1898" y="742" width="15" height="16" fill="#f0f0f0" stroke="#666"/><text x="1905.500" y="754" font-size="11" fill="#6a3a30" text-anchor="middle">M</text>
<rect x="1898" y="762" width="15" height="16" fill="#f0f0f0" stroke="#666"/><text x="1905.500" y="774" font-size="11" fill="#555530" text-anchor="middle">S</text>
<rect x="1898" y="783" width="15" height="13" fill="#8fa09c" stroke="#666"/><path d="M1900 793l5-6 5 6" fill="none" stroke="#2fb85c" stroke-width="1.500"/><text x="1905.500" y="805" font-size="9.500" fill="#666" text-anchor="middle">rd</text>
<circle cx="1898" cy="1040" r="9" fill="#1c1c1c"/><circle cx="1898" cy="1039" r="6" fill="#333" stroke="#b8b8b8" stroke-width="2.400" stroke-dasharray="2.500 1.200"/><circle cx="1898" cy="1039" r="2.400" fill="#999"/>
</svg>
</body></html>
